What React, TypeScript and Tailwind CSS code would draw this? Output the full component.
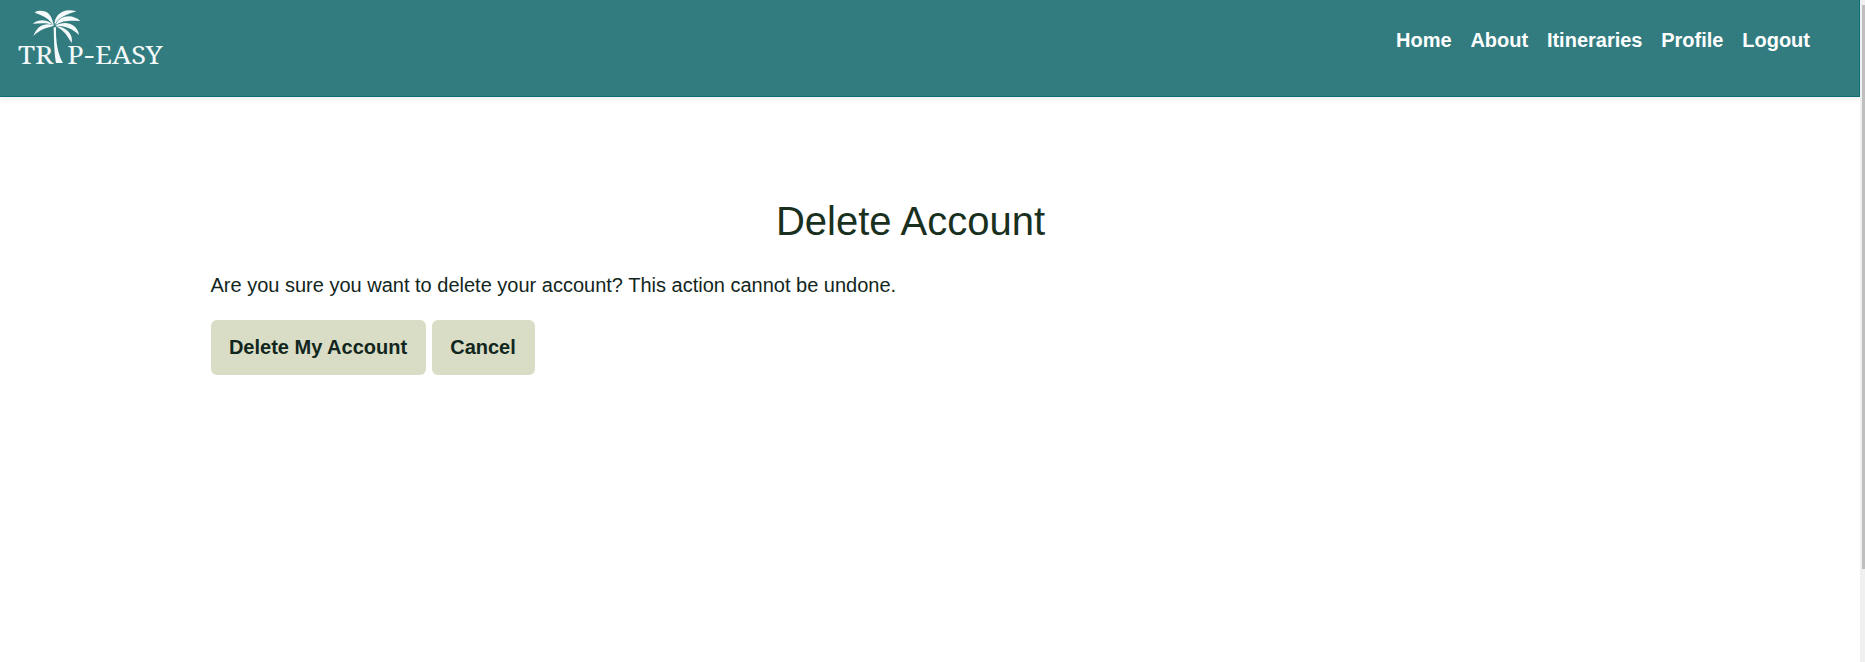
const links = ["Home", "About", "Itineraries", "Profile", "Logout"];

function Logo() {
  return (
    <svg viewBox="0 0 600 240" className="h-20 w-[200px]" fill="#f4f9fa" role="img" aria-label="Trip-Easy">
      <path d="M161 78 C150 60 148 55 140 48 C127 38 112 35 104 38 C119 43 132 48 142 56 C150 62 156 70 161 78Z" />
      <path d="M104 37 C118 29 137 32 147 42 C156 52 158 64 162 77 C151 65 143 52 130 46 C121 41 112 39 104 37Z" />
      <path d="M162 77 C147 62 124 53 98 71 C118 71 141 66 162 77Z" />
      <path d="M162 77 C139 66 112 74 100 108 C119 88 143 82 162 77Z" />
      <path d="M164 74 C162 48 187 22 229 34 C205 43 180 47 164 74Z" />
      <path d="M166 76 C178 46 215 40 241 63 C215 62 188 60 166 76Z" />
      <path d="M166 77 C194 61 232 70 237 105 C219 86 194 77 166 77Z" />
      <path d="M166 78 C195 80 221 99 215 129 C200 106 194 92 166 78Z" />
      <path d="M161 82 L168 82 C167 125 173 162 189 189 L168 189 C163 163 162 128 161 82Z" />
      <g fontFamily="'Noto Serif', 'Liberation Serif', serif" fontSize="77">
        <text x="54" y="191" textLength="106" lengthAdjust="spacingAndGlyphs">TR</text>
        <text x="202" y="191" textLength="49" lengthAdjust="spacingAndGlyphs">P</text>
        <text x="253" y="191" textLength="30" lengthAdjust="spacingAndGlyphs">-</text>
        <text x="285" y="191" textLength="203" lengthAdjust="spacingAndGlyphs">EASY</text>
      </g>
    </svg>
  );
}

export default function App() {
  return (
    <div className="flex h-[662px] overflow-hidden bg-white font-['Liberation_Sans',Arial,sans-serif] text-xl leading-[30px] text-[#122620]">
      <div className="w-[1860px] shrink-0">
        <header className="flex h-[97px] items-start justify-between border-r border-b border-[#077174] bg-[#327c80] pr-[49px] shadow-[0_2px_6px_rgba(0,0,0,0.08)]">
          <Logo />
          <nav className="flex gap-[18.75px] pt-[25px] font-bold text-white">
            {links.map((link) => (
              <a key={link} href="#">{link}</a>
            ))}
          </nav>
        </header>
        <main className="ml-[210.5px] w-[1400px] pt-[100px]">
          <h1 className="text-center text-[40px] leading-12 text-[#19301f]">Delete Account</h1>
          <p className="mt-[25px]">Are you sure you want to delete your account? This action cannot be undone.</p>
          <div className="mt-5 flex gap-1.5 font-bold">
            <button className="h-[55px] w-[215px] rounded-md bg-[#d9ddc5] pb-0.5">Delete My Account</button>
            <button className="h-[55px] w-[103px] rounded-md bg-[#d9ddc5] pb-0.5">Cancel</button>
          </div>
        </main>
      </div>
      <div className="w-[5px] bg-[#f0f0f0] pt-[5px] pl-0.5">
        <div className="h-[564px] bg-[#bfbfbf]" />
      </div>
    </div>
  );
}
